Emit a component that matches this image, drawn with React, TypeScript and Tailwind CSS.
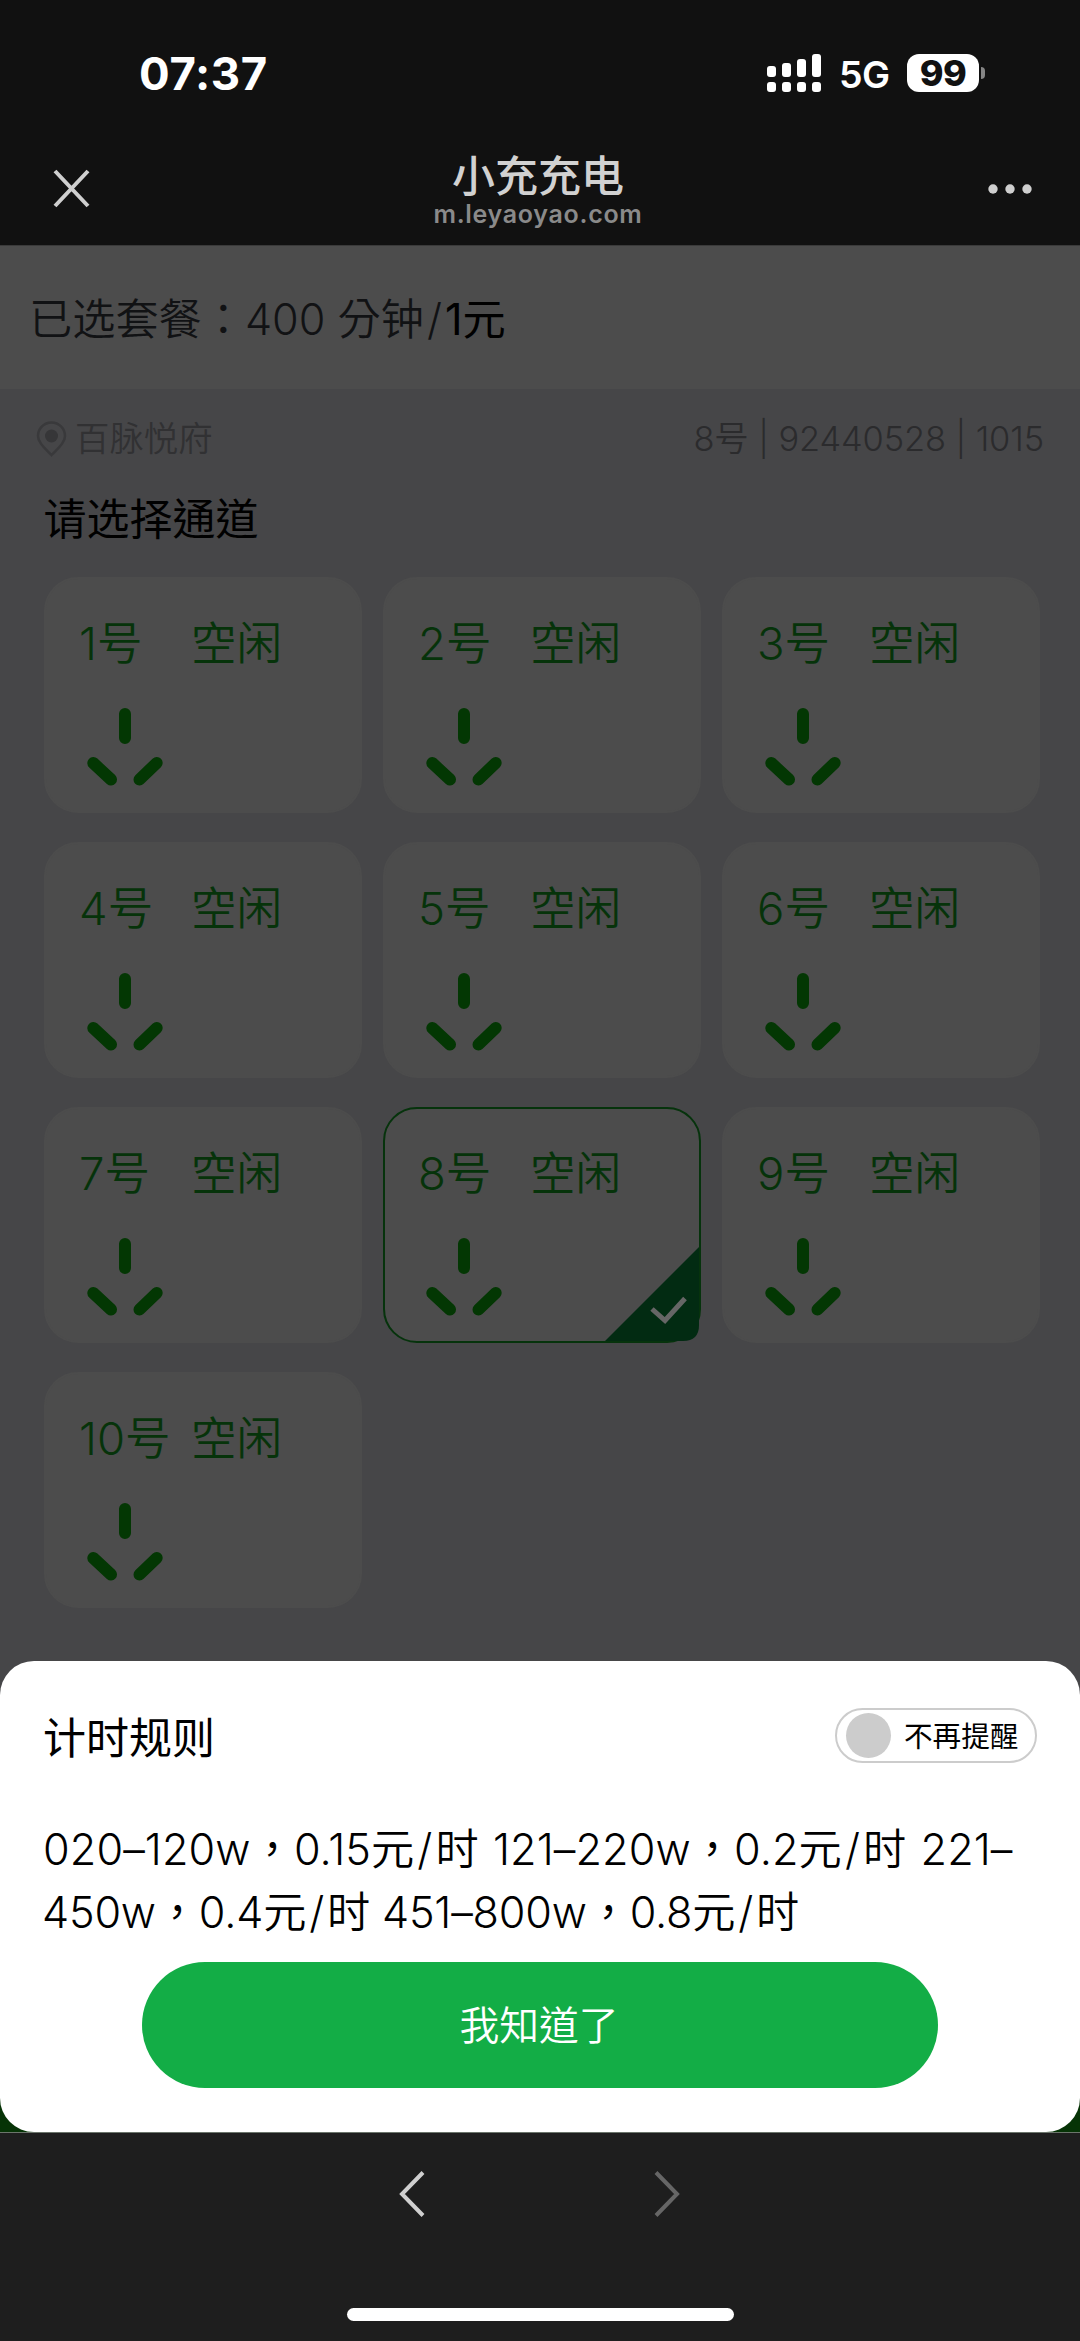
const channels = [1, 2, 3, 4, 5, 6, 7, 8, 9, 10];
const selected = 8;

const StatusBar = () => {
  return (
    <div className="flex h-[132px] items-start justify-between pl-[139px] pr-[95px] pt-[53px] font-['Inter',sans-serif] text-white">
      <span className="text-[45.5px] font-bold leading-[41px] tracking-[0.6px]">07:37</span>
      <div className="flex items-center">
        <svg width="54" height="38" viewBox="0 0 54 38" fill="currentColor">
          <rect x="0" y="12" width="9" height="11" rx="3" />
          <rect x="15" y="9" width="9" height="14" rx="3" />
          <rect x="30" y="5" width="9" height="18" rx="3" />
          <rect x="45" y="0" width="9" height="23" rx="3" />
          <rect x="0" y="28" width="9" height="10" rx="3" />
          <rect x="15" y="28" width="9" height="10" rx="3" />
          <rect x="30" y="28" width="9" height="10" rx="3" />
          <rect x="45" y="28" width="9" height="10" rx="3" />
        </svg>
        <span className="ml-[18px] mt-[5px] w-[68px] whitespace-nowrap text-[37.5px] font-semibold leading-[34px] tracking-[-0.6px]">5G</span>
        <div className="flex h-[38px] w-[72px] items-center justify-center rounded-[12px] bg-white text-[36px] font-extrabold tracking-[-0.5px] text-[#111]">
          99
        </div>
        <div className="ml-[2px] h-3 w-1 rounded-r-full bg-[#858585]" />
      </div>
    </div>
  );
};

const NavBar = () => {
  return (
    <div className="flex h-[113px] items-start justify-between pl-[53px] pr-[48px] pt-[18px]">
      <svg className="mt-[19px]" width="38" height="40" viewBox="0 0 38 40" fill="none" stroke="#cfcfcf" strokeWidth="4">
        <path d="M2 2L35 37M35 2L2 37" />
      </svg>
      <div className="flex flex-col items-center pr-[3px] pt-px">
        <h1 className="text-[43px] font-medium leading-[50px] text-[#d1d1d1]">小充充电</h1>
        <p className="font-['Inter',sans-serif] text-[25px] font-semibold leading-[27px] tracking-[0.7px] text-[#8a8a8a]">m.leyaoyao.com</p>
      </div>
      <svg className="mt-[33px]" width="44" height="12" viewBox="0 0 44 12" fill="#cfcfcf">
        <circle cx="5" cy="6" r="4.7" />
        <circle cx="22" cy="6" r="4.7" />
        <circle cx="39" cy="6" r="4.7" />
      </svg>
    </div>
  );
};

const Socket = () => {
  return (
    <svg width="78" height="80" viewBox="0 0 78 80" fill="none" stroke="#033703" strokeWidth="12" strokeLinecap="round">
      <path d="M39 8V32M7.3 57L25 73.5M70.7 57L53.5 73.5" />
    </svg>
  );
};

const ChannelCard = ({ id }: { id: number }) => {
  const active = id === selected;
  return (
    <div
      className={`relative h-[236px] rounded-[34px] border-2 bg-[#4c4c4c] pl-[33.5px] pt-[37px] ${
        active ? "border-[#06330c]" : "border-[#4c4c4c]"
      }`}
    >
      <div className="flex text-[45.5px] font-[350] leading-[55px] text-[#06330a]">
        <span className="w-[112px] whitespace-nowrap">{id}号</span>
        <span>空闲</span>
      </div>
      <div className="mt-[35px] pl-[6.5px]">
        <Socket />
      </div>
      {active && (
        <svg className="absolute bottom-0 right-0" width="94" height="94" viewBox="0 0 94 94">
          <path d="M94 0V78Q94 94 78 94H0Z" fill="#022b12" />
          <path d="M47 62L60 73.500L80 51.500" fill="none" stroke="#666" strokeWidth="5" />
        </svg>
      )}
    </div>
  );
};

const Slash = () => <span className="mx-[3px]">/</span>;

const RulesSheet = () => {
  return (
    <div className="bg-gradient-to-b from-[#464648] from-50% to-[#063306] to-50%">
      <div className="h-[471px] rounded-[34px] bg-white px-[43px] pt-[47px] text-black">
        <div className="flex h-[58px] items-start justify-between">
          <h2 className="pt-[3px] text-[43px] leading-[55px]">计时规则</h2>
          <div className="flex h-[55px] w-[202px] items-center rounded-full border-2 border-[#ccc] pl-[9px]">
            <span className="h-[45px] w-[45px] rounded-full bg-[#ccc]" />
            <span className="ml-[13px] mt-[4px] text-[28.6px] leading-none">不再提醒</span>
          </div>
        </div>
        <div className="mt-[52px] whitespace-nowrap text-[43.2px] font-[350] leading-[63px]">
          <p className="tracking-[0.1px] [word-spacing:2px]">
            020–120w，0.15元
            <Slash />时 121–220w，0.2元
            <Slash />时 221–
          </p>
          <p className="ml-[-1px] tracking-[-0.2px]">
            450w，0.4元
            <Slash />时 451–800w，0.8元
            <Slash />时
          </p>
        </div>
        <button className="mx-auto mt-[18px] flex h-[126px] w-[796px] items-center justify-center rounded-full bg-[#13ad46] pr-[2px] pt-[2px] text-[39.8px] font-[350] text-white">
          我知道了
        </button>
      </div>
    </div>
  );
};

const BottomBar = () => {
  return (
    <div className="flex flex-1 flex-col items-center justify-between border-t border-[#6b756b] bg-[#1e1e1e] pb-5 pt-[37px]">
      <div className="flex w-[284px] justify-between">
        <svg width="28" height="48" viewBox="0 0 28 48" fill="none" stroke="#d0d0d0" strokeWidth="4">
          <path d="M25 2.500L4 24L25 45.500" />
        </svg>
        <svg width="28" height="48" viewBox="0 0 28 48" fill="none" stroke="#666" strokeWidth="4">
          <path d="M2 2.500L23 24L2 45.500" />
        </svg>
      </div>
      <div className="h-[13px] w-[387px] rounded-full bg-white" />
    </div>
  );
};

export default function App() {
  return (
    <div className="flex h-[2341px] w-[1080px] flex-col overflow-hidden bg-[#464648] font-['Inter','Noto_Sans_CJK_TC',sans-serif]">
      <header className="h-[245px] bg-[#111]">
        <StatusBar />
        <NavBar />
      </header>

      {/* Selected package */}
      <div className="flex h-[144px] items-center border-t border-[#3a3a3a] bg-[#4c4c4c] pl-[29px] pt-[3px] text-[43.2px] font-[350] text-[#111214]">
        <p>
          已选套餐：400 分钟
          <Slash />
          <span className="font-normal text-black">1元</span>
        </p>
      </div>

      <main className="h-[1272px] pl-[43.5px] pr-[40px]">
        <div className="flex h-[98px] items-center justify-between pt-[2px] text-[34.4px] font-[350] text-[#2b2b2d]">
          <div className="ml-[-7.5px] flex items-center text-[#313133]">
            <svg className="mr-[8px]" width="31" height="36" viewBox="0 0 31 36" fill="none">
              <path d="M15.500 34C12 30 2 23 2 15A13.500 13.500 0 0 1 29 15C29 23 19 30 15.500 34Z" stroke="#39393b" strokeWidth="2.500" />
              <circle cx="15.500" cy="15" r="6.500" fill="#363638" />
            </svg>
            百脉悦府
          </div>
          <span className="mr-[-4px] tracking-[-0.1px]">8号 | 92440528 | 1015</span>
        </div>
        <h2 className="pt-[2px] text-[43px] leading-[60px] text-black">请选择通道</h2>
        <div className="mt-[28px] grid grid-cols-3 gap-x-[20.5px] gap-y-[29px]">
          {channels.map((id) => (
            <ChannelCard key={id} id={id} />
          ))}
        </div>
      </main>

      <RulesSheet />
      <BottomBar />
    </div>
  );
}
